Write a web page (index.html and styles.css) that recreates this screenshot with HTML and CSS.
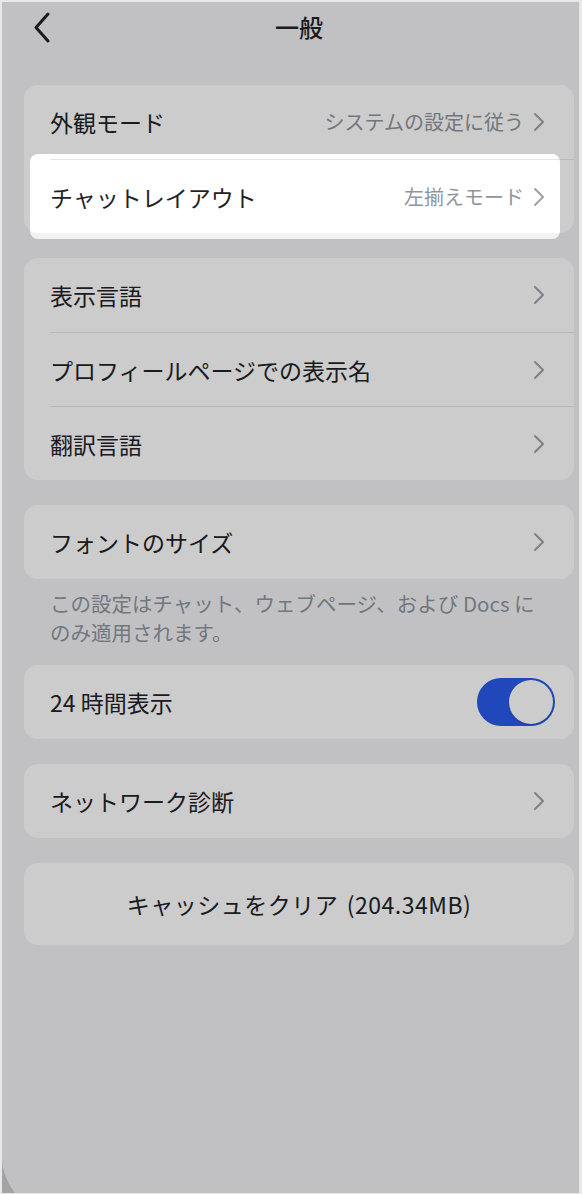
FILE: index.html
```html
<!DOCTYPE html>
<html lang="ja">
<head>
<meta charset="utf-8">
<title>一般</title>
<link rel="stylesheet" href="styles.css">
</head>
<body>
<div class="frame">
  <div class="screen">
    <header class="nav">
      <div class="nav-left">
        <svg class="back" width="17" height="31" viewBox="0 0 17 31" fill="none"><path d="M15 2 L3 15.5 L15 29" stroke="#1f2329" stroke-width="3" stroke-linecap="round" stroke-linejoin="round"/></svg>
      </div>
      <h1 class="title">一般</h1>
      <div class="nav-right"></div>
    </header>

    <section class="card card-first">
      <div class="row">
        <div class="row-inner">
          <span class="label">外観モード</span>
          <span class="value">システムの設定に従う</span>
          <svg class="chev" width="12" height="20" viewBox="0 0 12 20" fill="none"><path d="M2 2 L10 10 L2 18" stroke="currentColor" stroke-width="2" stroke-linecap="round" stroke-linejoin="round"/></svg>
        </div>
      </div>
      <div class="row row-spot">
        <div class="row-inner">
          <span class="label">チャットレイアウト</span>
          <span class="value">左揃えモード</span>
          <svg class="chev" width="12" height="20" viewBox="0 0 12 20" fill="none"><path d="M2 2 L10 10 L2 18" stroke="currentColor" stroke-width="2" stroke-linecap="round" stroke-linejoin="round"/></svg>
        </div>
        <div class="spotlight"></div>
      </div>
    </section>

    <section class="card">
      <div class="row">
        <div class="row-inner">
          <span class="label">表示言語</span>
          <svg class="chev" width="12" height="20" viewBox="0 0 12 20" fill="none"><path d="M2 2 L10 10 L2 18" stroke="currentColor" stroke-width="2" stroke-linecap="round" stroke-linejoin="round"/></svg>
        </div>
      </div>
      <div class="row">
        <div class="row-inner">
          <span class="label">プロフィールページでの表示名</span>
          <svg class="chev" width="12" height="20" viewBox="0 0 12 20" fill="none"><path d="M2 2 L10 10 L2 18" stroke="currentColor" stroke-width="2" stroke-linecap="round" stroke-linejoin="round"/></svg>
        </div>
      </div>
      <div class="row">
        <div class="row-inner">
          <span class="label">翻訳言語</span>
          <svg class="chev" width="12" height="20" viewBox="0 0 12 20" fill="none"><path d="M2 2 L10 10 L2 18" stroke="currentColor" stroke-width="2" stroke-linecap="round" stroke-linejoin="round"/></svg>
        </div>
      </div>
    </section>

    <section class="card">
      <div class="row">
        <div class="row-inner">
          <span class="label">フォントのサイズ</span>
          <svg class="chev" width="12" height="20" viewBox="0 0 12 20" fill="none"><path d="M2 2 L10 10 L2 18" stroke="currentColor" stroke-width="2" stroke-linecap="round" stroke-linejoin="round"/></svg>
        </div>
      </div>
    </section>
    <p class="note">この設定はチャット、ウェブページ、および Docs に<br>のみ適用されます。</p>

    <section class="card card-after-note">
      <div class="row">
        <div class="row-inner row-toggle">
          <span class="label">24 時間表示</span>
          <span class="toggle"><span class="knob"></span></span>
        </div>
      </div>
    </section>

    <section class="card">
      <div class="row">
        <div class="row-inner">
          <span class="label">ネットワーク診断</span>
          <svg class="chev" width="12" height="20" viewBox="0 0 12 20" fill="none"><path d="M2 2 L10 10 L2 18" stroke="currentColor" stroke-width="2" stroke-linecap="round" stroke-linejoin="round"/></svg>
        </div>
      </div>
    </section>

    <section class="card card-button">
      <span class="button-text">キャッシュをクリア (204.34MB)</span>
    </section>
  </div>
</div>
</body>
</html>
```

FILE: styles.css
```css
html, body {
  margin: 0;
  padding: 0;
}
body {
  background: #e8e8e9;
  height: 1194px;
  overflow: hidden;
  font-family: "Noto Sans CJK JP", "Noto Sans", sans-serif;
  color: #1f2329;
}
.frame {
  margin: 2px 3px 0 2px;
  height: 1191px;
  background: #a3a3a5;
  overflow: hidden;
}
.screen {
  width: 550px;
  height: 1213px;
  padding: 0 22px;
  background: #f2f2f5;
  border-bottom-left-radius: 59px;
  overflow: hidden;
}
.nav {
  height: 50px;
  display: grid;
  grid-template-columns: 1fr auto 1fr;
  align-items: center;
}
.nav-left {
  display: flex;
  align-items: center;
  padding-left: 9px;
}
.back {
  display: block;
}
.title {
  margin: 0;
  font-size: 24px;
  font-weight: 500;
  line-height: 30px;
}
.card {
  background: #ffffff;
  border-radius: 14px;
  margin-top: 24px;
}
.card-first {
  margin-top: 33px;
}
.card + .card {
  margin-top: 25px;
}
.card.card-after-note {
  margin-top: 0;
}
.row {
  height: 74px;
  padding-left: 26px;
}
.row-inner {
  height: 100%;
  display: flex;
  align-items: center;
  padding-right: 29px;
  box-sizing: border-box;
}
.row + .row .row-inner {
  border-top: 1px solid #e6e6ea;
}
.label {
  font-size: 23px;
  line-height: 30px;
  flex: 1;
  white-space: nowrap;
}
.value {
  font-size: 20px;
  line-height: 28px;
  color: #8f959e;
  margin-right: 9px;
  white-space: nowrap;
}
.chev {
  display: block;
  color: #9da1a8;
}
.row-spot {
  position: relative;
}
.spotlight {
  position: absolute;
  top: -5px;
  bottom: -6px;
  left: 6px;
  right: 14px;
  border-radius: 8px;
  box-shadow: 0 0 0 3000px rgba(0, 0, 0, 0.2);
  z-index: 10;
  pointer-events: none;
}
.note {
  margin: 0;
  padding: 10px 10px 18px 26px;
  font-size: 20.5px;
  line-height: 29px;
  color: #8f959e;
}
.row-toggle {
  padding-right: 19px;
}
.toggle {
  width: 78px;
  height: 48px;
  border-radius: 24px;
  background: #285aea;
  display: flex;
  align-items: center;
  justify-content: flex-end;
  padding: 2px;
  box-sizing: border-box;
}
.knob {
  width: 44px;
  height: 44px;
  border-radius: 50%;
  background: #ffffff;
  box-shadow: 0 1px 2px rgba(0, 0, 0, 0.15);
}
.card-button {
  height: 82px;
  display: flex;
  align-items: center;
  justify-content: center;
}
.button-text {
  font-size: 23px;
  line-height: 30px;
  letter-spacing: 0.5px;
  word-spacing: 3px;
}
```
